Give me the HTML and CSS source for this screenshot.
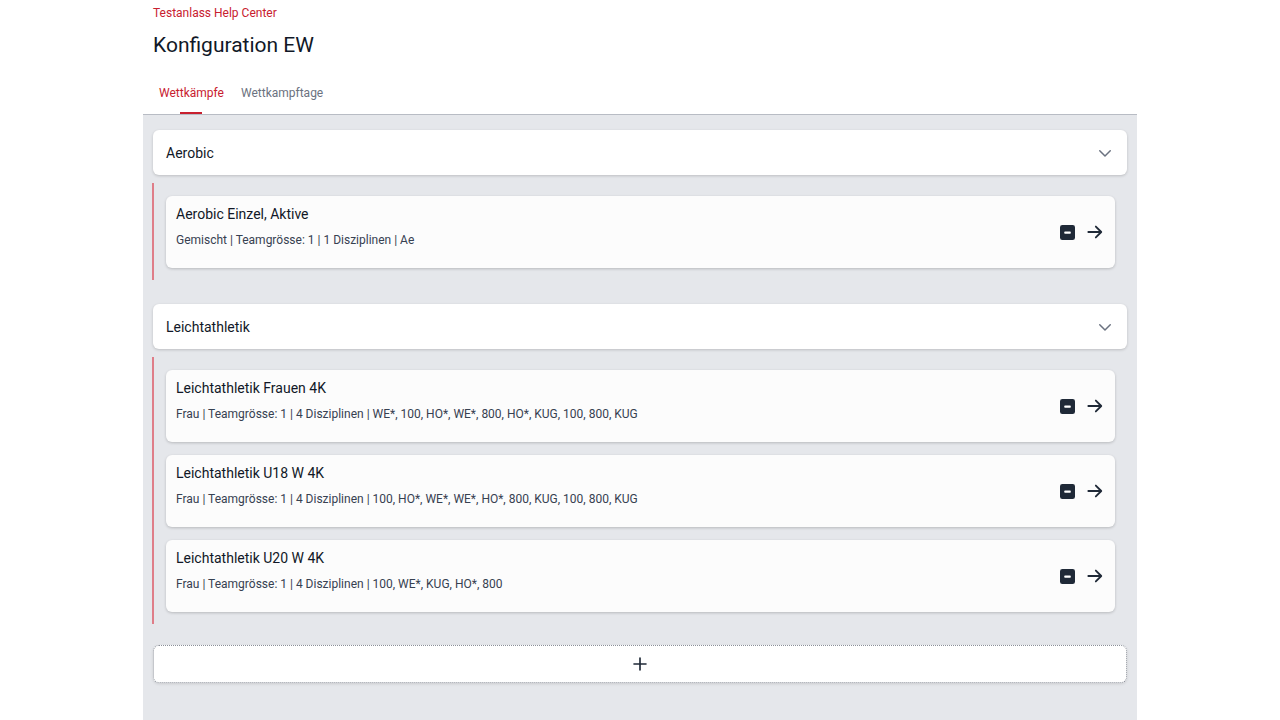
FILE: index.html
```html
<!DOCTYPE html>
<html lang="de">
<head>
  <meta charset="UTF-8">
  <meta name="viewport" content="width=device-width, initial-scale=1.0">
  <title>Konfiguration EW</title>
  <link rel="stylesheet" href="styles.css">
</head>
<body>
  <div class="page">
    <div class="header">
      <a class="crumb" href="#">Testanlass Help Center</a>
      <h1>Konfiguration EW</h1>
      <nav class="tabs">
        <a class="tab active" href="#">Wettkämpfe</a>
        <a class="tab" href="#">Wettkampftage</a>
      </nav>
    </div>

    <div class="panel">
      <!-- Aerobic -->
      <div class="group">
        <div class="group-head">
          <span>Aerobic</span>
          <svg class="chevron" viewBox="0 0 24 24" width="18" height="18"><path d="M5 9l7 7 7-7" fill="none" stroke="currentColor" stroke-width="2" stroke-linecap="round" stroke-linejoin="round"/></svg>
        </div>
        <div class="group-list">
          <div class="card">
            <div class="card-text">
              <div class="card-title">Aerobic Einzel, Aktive</div>
              <div class="card-sub">Gemischt | Teamgrösse: 1 | 1 Disziplinen | Ae</div>
            </div>
            <div class="card-actions">
              <svg class="minus" viewBox="0 0 16 16" width="15" height="15"><rect x="0" y="0" width="16" height="16" rx="2.5" fill="currentColor"/><rect x="4.5" y="7" width="7" height="2.2" rx="0.8" fill="#fff"/></svg>
              <svg class="arrow" viewBox="0 0 24 24" width="20" height="20"><path d="M4 12h15M13 5.5l6.5 6.5-6.5 6.5" fill="none" stroke="currentColor" stroke-width="2.2" stroke-linecap="round" stroke-linejoin="round"/></svg>
            </div>
          </div>
        </div>
      </div>

      <!-- Leichtathletik -->
      <div class="group">
        <div class="group-head">
          <span>Leichtathletik</span>
          <svg class="chevron" viewBox="0 0 24 24" width="18" height="18"><path d="M5 9l7 7 7-7" fill="none" stroke="currentColor" stroke-width="2" stroke-linecap="round" stroke-linejoin="round"/></svg>
        </div>
        <div class="group-list">
          <div class="card">
            <div class="card-text">
              <div class="card-title">Leichtathletik Frauen 4K</div>
              <div class="card-sub">Frau | Teamgrösse: 1 | 4 Disziplinen | WE*, 100, HO*, WE*, 800, HO*, KUG, 100, 800, KUG</div>
            </div>
            <div class="card-actions">
              <svg class="minus" viewBox="0 0 16 16" width="15" height="15"><rect x="0" y="0" width="16" height="16" rx="2.5" fill="currentColor"/><rect x="4.5" y="7" width="7" height="2.2" rx="0.8" fill="#fff"/></svg>
              <svg class="arrow" viewBox="0 0 24 24" width="20" height="20"><path d="M4 12h15M13 5.5l6.5 6.5-6.5 6.5" fill="none" stroke="currentColor" stroke-width="2.2" stroke-linecap="round" stroke-linejoin="round"/></svg>
            </div>
          </div>
          <div class="card">
            <div class="card-text">
              <div class="card-title">Leichtathletik U18 W 4K</div>
              <div class="card-sub">Frau | Teamgrösse: 1 | 4 Disziplinen | 100, HO*, WE*, WE*, HO*, 800, KUG, 100, 800, KUG</div>
            </div>
            <div class="card-actions">
              <svg class="minus" viewBox="0 0 16 16" width="15" height="15"><rect x="0" y="0" width="16" height="16" rx="2.5" fill="currentColor"/><rect x="4.5" y="7" width="7" height="2.2" rx="0.8" fill="#fff"/></svg>
              <svg class="arrow" viewBox="0 0 24 24" width="20" height="20"><path d="M4 12h15M13 5.5l6.5 6.5-6.5 6.5" fill="none" stroke="currentColor" stroke-width="2.2" stroke-linecap="round" stroke-linejoin="round"/></svg>
            </div>
          </div>
          <div class="card">
            <div class="card-text">
              <div class="card-title">Leichtathletik U20 W 4K</div>
              <div class="card-sub">Frau | Teamgrösse: 1 | 4 Disziplinen | 100, WE*, KUG, HO*, 800</div>
            </div>
            <div class="card-actions">
              <svg class="minus" viewBox="0 0 16 16" width="15" height="15"><rect x="0" y="0" width="16" height="16" rx="2.5" fill="currentColor"/><rect x="4.5" y="7" width="7" height="2.2" rx="0.8" fill="#fff"/></svg>
              <svg class="arrow" viewBox="0 0 24 24" width="20" height="20"><path d="M4 12h15M13 5.5l6.5 6.5-6.5 6.5" fill="none" stroke="currentColor" stroke-width="2.2" stroke-linecap="round" stroke-linejoin="round"/></svg>
            </div>
          </div>
        </div>
      </div>

      <button class="add-btn" type="button">
        <svg viewBox="0 0 24 24" width="18" height="18"><path d="M12 4v16M4 12h16" fill="none" stroke="currentColor" stroke-width="2.2" stroke-linecap="round"/></svg>
      </button>
    </div>
  </div>
</body>
</html>
```

FILE: styles.css
```css
body {
  margin: 0;
  font-family: Roboto, "Noto Sans", sans-serif;
  color: #1f2937;
  background-color: #fff;
}
.page {
  width: 994px;
  margin: 0 auto;
  min-height: 720px;
  display: flex;
  flex-direction: column;
}
.header {
  padding: 6px 10px 0;
  border-bottom: 1px solid #b8bcc4;
}
.crumb {
  display: block;
  color: #c8202f;
  font-size: 12px;
  line-height: 14px;
  text-decoration: none;
}
h1 {
  margin: 11px 0 0;
  font-size: 21px;
  font-weight: 400;
  line-height: 28px;
  color: #111827;
}
.tabs {
  display: flex;
  margin-top: 16px;
}
.tab {
  position: relative;
  padding: 11px 6px 14px;
  margin-right: 5px;
  font-size: 12px;
  line-height: 14px;
  color: #6b7280;
  text-decoration: none;
}
.tab.active {
  color: #c8202f;
}
.tab.active::after {
  content: "";
  position: absolute;
  left: 50%;
  bottom: 0;
  width: 22px;
  height: 2px;
  margin-left: -11px;
  background-color: #c8202f;
}
.panel {
  flex: 1;
  background-color: #e5e7eb;
  padding: 15px 10px 30px;
}
.group {
  margin-bottom: 24px;
}
.group-head {
  display: flex;
  align-items: center;
  justify-content: space-between;
  height: 45px;
  padding: 0 13px;
  background-color: #fff;
  border-radius: 6px;
  box-shadow: 0 1px 3px rgba(0, 0, 0, 0.18);
  font-size: 14px;
  color: #111827;
}
.chevron {
  color: #6b7280;
}
.group-list {
  margin-top: 8px;
  margin-left: -1px;
  border-left: 2px solid #df7d88;
  padding: 13px 12px 12px 12px;
  display: flex;
  flex-direction: column;
  gap: 13px;
}
.card {
  display: flex;
  align-items: center;
  justify-content: space-between;
  height: 72px;
  padding: 0 10px;
  background-color: #fcfcfc;
  border-radius: 6px;
  box-shadow: 0 1px 3px rgba(0, 0, 0, 0.2);
}
.card-text {
  align-self: flex-start;
  padding-top: 10px;
}
.card-title {
  font-size: 14px;
  line-height: 16px;
  color: #111827;
}
.card-sub {
  margin-top: 11px;
  font-size: 12px;
  line-height: 14px;
  color: #374151;
}
.card-actions {
  display: flex;
  align-items: center;
  gap: 10px;
  color: #1f2937;
}
.add-btn {
  display: flex;
  align-items: center;
  justify-content: center;
  width: 100%;
  height: 38px;
  margin-top: -3px;
  background-color: #fff;
  border: 1px dotted #8b9099;
  border-radius: 6px;
  box-shadow: 0 1px 3px rgba(0, 0, 0, 0.12);
  color: #1f2937;
  cursor: pointer;
}
```
